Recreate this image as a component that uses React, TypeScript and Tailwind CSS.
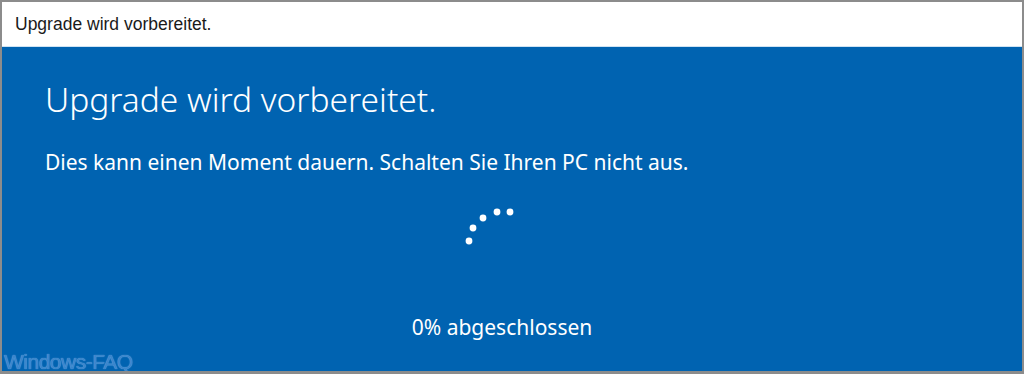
export default function App() {
  const dots = [
    { x: 510, y: 211 },
    { x: 497, y: 211 },
    { x: 483, y: 217 },
    { x: 473, y: 227 },
    { x: 469, y: 240 },
  ];

  return (
    <div className="relative flex h-[374px] w-[1024px] flex-col overflow-hidden border-x-2 border-t-2 border-b-[3px] border-[#8c8c8c] bg-[#0063b1] font-['Noto_Sans',sans-serif]">
      <div className="flex h-[45px] shrink-0 items-center border-b border-[#cfe3f3] bg-white pl-[13px]">
        <span className="font-['Liberation_Sans',sans-serif] text-[17.5px] text-[#1a1a1a]">Upgrade wird vorbereitet.</span>
      </div>
      <div className="flex flex-1 flex-col text-white">
        <h1 className="mt-[32px] pl-[43px] text-[33.5px] leading-[40px] font-light">Upgrade wird vorbereitet.</h1>
        <p className="mt-[29px] pl-[43px] text-[21px] leading-[28px]">Dies kann einen Moment dauern. Schalten Sie Ihren PC nicht aus.</p>
        <svg className="mt-[30px] ml-[462px]" width="56" height="40" viewBox="464 205 56 40">
          {dots.map((d) => (
            <circle key={d.x} cx={d.x} cy={d.y} r="3.4" fill="#ffffff" />
          ))}
        </svg>
        <p className="mt-[67px] pr-[20px] text-center text-[21px] leading-[28px]">0% abgeschlossen</p>
      </div>
      <span className="absolute bottom-[-3px] left-[2px] font-['Liberation_Sans',sans-serif] text-[21px] leading-[24px] tracking-[-0.5px] text-[#3a86cc] [text-shadow:0_0_1px_#7db7ea]">
        Windows-FAQ
      </span>
    </div>
  );
}
